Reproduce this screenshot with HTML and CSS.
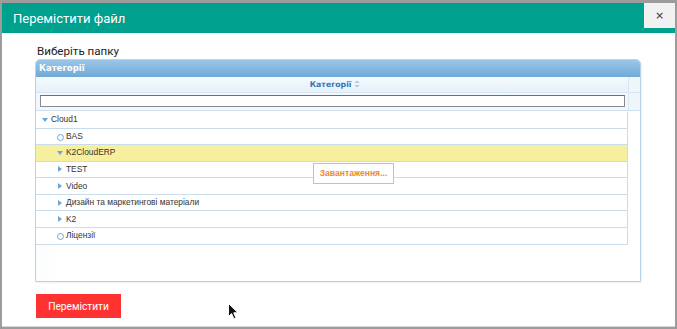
FILE: index.html
```html
<!DOCTYPE html>
<html lang="uk">
<head>
<meta charset="utf-8">
<title>Перемістити файл</title>
<link rel="stylesheet" href="styles.css">
</head>
<body>
<div class="dialog">
  <div class="dlg-head">
    <div class="dlg-title">Перемістити файл</div>
    <button class="dlg-close" type="button">×</button>
  </div>
  <div class="dlg-body">
    <div class="label">Виберіть папку</div>
    <div class="panel">
      <div class="panel-head">Категорії</div>
      <div class="grid-head">
        <div class="col-title">Категорії <span class="sort">
          <svg width="6" height="8" viewBox="0 0 6 8"><path d="M3 0.5 L5.5 3 H0.5 Z" fill="#a9c7e2"/><path d="M3 7.5 L5.5 5 H0.5 Z" fill="#a9c7e2"/></svg>
        </span></div>
        <div class="scroll-col"></div>
      </div>
      <div class="filter-row">
        <div class="filter-cell"><input class="filter" type="text"></div>
        <div class="scroll-col"></div>
      </div>
      <div class="grid-body">
        <div class="rows">
          <div class="row lvl0"><span class="ico down"></span>Cloud1</div>
          <div class="row lvl1"><span class="ico leaf"></span>BAS</div>
          <div class="row lvl1 hl"><span class="ico down"></span>K2CloudERP</div>
          <div class="row lvl1"><span class="ico right"></span>TEST</div>
          <div class="row lvl1"><span class="ico right"></span>Video</div>
          <div class="row lvl1"><span class="ico right"></span>Дизайн та маркетингові матеріали</div>
          <div class="row lvl1"><span class="ico right"></span>K2</div>
          <div class="row lvl1"><span class="ico leaf"></span>Ліцензії</div>
        </div>
        <div class="loading">Завантаження...</div>
      </div>
    </div>
    <button class="move-btn" type="button">Перемістити</button>
  </div>
  <svg class="cursor" width="11" height="17" viewBox="0 0 11 17"><path d="M0.5 0.5 L0.5 13.5 L3.6 10.6 L6 16 L8 15.1 L5.7 9.8 L10 9.8 Z" fill="#111" stroke="#fff" stroke-width="1"/></svg>
</div>
</body>
</html>
```

FILE: styles.css
```css
* { box-sizing: border-box; }
html, body { margin: 0; padding: 0; }
body {
  width: 677px;
  height: 329px;
  background: #9c9c9c;
  overflow: hidden;
  padding-top: 3px;
}
.dialog {
  position: relative;
  margin: 0 2px 0 2px;
  height: 324px;
  background: #fff;
  border-bottom: 1px solid #d8d8d8;
}
.dlg-head {
  height: 30px;
  background: #00a08f;
  display: flex;
  align-items: flex-start;
  justify-content: space-between;
}
.dlg-title {
  font-family: Roboto, "Noto Sans", sans-serif;
  font-size: 13px;
  color: #fff;
  padding: 7px 0 0 11px;
  line-height: 17px;
}
.dlg-close {
  width: 31px;
  height: 25px;
  border: none;
  margin: 0;
  padding: 0;
  background: #f1f1f1;
  color: #333;
  font-family: "DejaVu Sans", sans-serif;
  font-size: 11px;
  line-height: 25px;
  text-align: center;
}
.dlg-body {
  padding: 10px 0 0 33px;
}
.label {
  font-family: Roboto, "Noto Sans", sans-serif;
  font-size: 11.6px;
  color: #222;
  line-height: 16px;
  padding-left: 2px;
}
.panel {
  width: 606px;
  height: 223px;
  border: 1px solid #b9d3e8;
  border-radius: 5px 5px 0 0;
  display: flex;
  flex-direction: column;
  background: #fff;
  box-shadow: 1px 1px 1px rgba(0,0,0,0.06);
}
.panel-head {
  height: 17px;
  background: linear-gradient(#9ac6e8, #6fa9d8);
  border-radius: 4px 4px 0 0;
  color: #fff;
  font-family: "DejaVu Sans", sans-serif;
  font-weight: bold;
  font-size: 8.5px;
  line-height: 17px;
  padding-left: 3px;
}
.grid-head {
  height: 16px;
  display: flex;
  background: linear-gradient(#f4f9fd, #e6f1fb);
  border-bottom: 1px solid #d6e6f3;
}
.col-title {
  flex: 1;
  text-align: center;
  color: #3576b3;
  font-family: "DejaVu Sans", sans-serif;
  font-weight: bold;
  font-size: 7.8px;
  line-height: 16px;
  padding-left: 6px;
}
.sort svg { vertical-align: -1px; }
.scroll-col {
  width: 12px;
  border-left: 1px solid #d6e6f3;
  background: #eef5fb;
}
.filter-row {
  height: 18px;
  display: flex;
  background: #f1f7fc;
  border-bottom: 1px solid #cfe0ee;
}
.filter-cell {
  flex: 1;
  padding: 2px 3px 0 4px;
}
.filter {
  display: block;
  width: 100%;
  height: 12px;
  border: 1px solid #8a8a8a;
  border-top-color: #6f6f6f;
  background: #fff;
  padding: 0;
  margin: 0;
}
.grid-body {
  position: relative;
  flex: 1;
  background: linear-gradient(90deg, #fbfcfd, #fff 24px);
  padding-right: 12px;
}
.rows {
  padding-top: 1px;
}
.row {
  height: 16.57px;
  border-bottom: 1px solid #c9dcec;
  border-right: 1px solid #c9dcec;
  font-family: "Liberation Sans", Arial, sans-serif;
  font-size: 8.4px;
  color: #333;
  line-height: 15px;
  display: flex;
  align-items: center;
  background: #fff;
}
.row.hl { background: #f6ef9e; }
.lvl0 { padding-left: 6px; }
.lvl1 { padding-left: 21px; }
.ico {
  display: inline-block;
  width: 8px;
  height: 8px;
  position: relative;
  margin-right: 1px;
}
.ico.down::before {
  content: "";
  position: absolute;
  left: 0; top: 2px;
  border-left: 3px solid transparent;
  border-right: 3px solid transparent;
  border-top: 4px solid #6aa6dc;
}
.ico.right::before {
  content: "";
  position: absolute;
  left: 1px; top: 1px;
  border-top: 3px solid transparent;
  border-bottom: 3px solid transparent;
  border-left: 4px solid #6aa6dc;
}
.ico.leaf::before {
  content: "";
  position: absolute;
  left: 0; top: 1.5px;
  width: 5px; height: 5px;
  border: 1px solid #6aa6dc;
  border-radius: 50%;
}
.loading {
  position: absolute;
  left: 277px;
  top: 52px;
  width: 81px;
  height: 21px;
  border: 1px solid #a6c9e2;
  background: #fff;
  color: #ef8a2a;
  font-family: "Liberation Sans", Arial, sans-serif;
  font-weight: bold;
  font-size: 8.6px;
  line-height: 19px;
  text-align: center;
}
.move-btn {
  display: block;
  margin: 12px 0 0 1px;
  width: 85px;
  height: 24px;
  border: none;
  background: #ff3232;
  color: #fff;
  font-family: Roboto, "Noto Sans", sans-serif;
  font-size: 10.2px;
  padding: 0;
}
.cursor {
  position: absolute;
  left: 226px;
  top: 300px;
}
```
